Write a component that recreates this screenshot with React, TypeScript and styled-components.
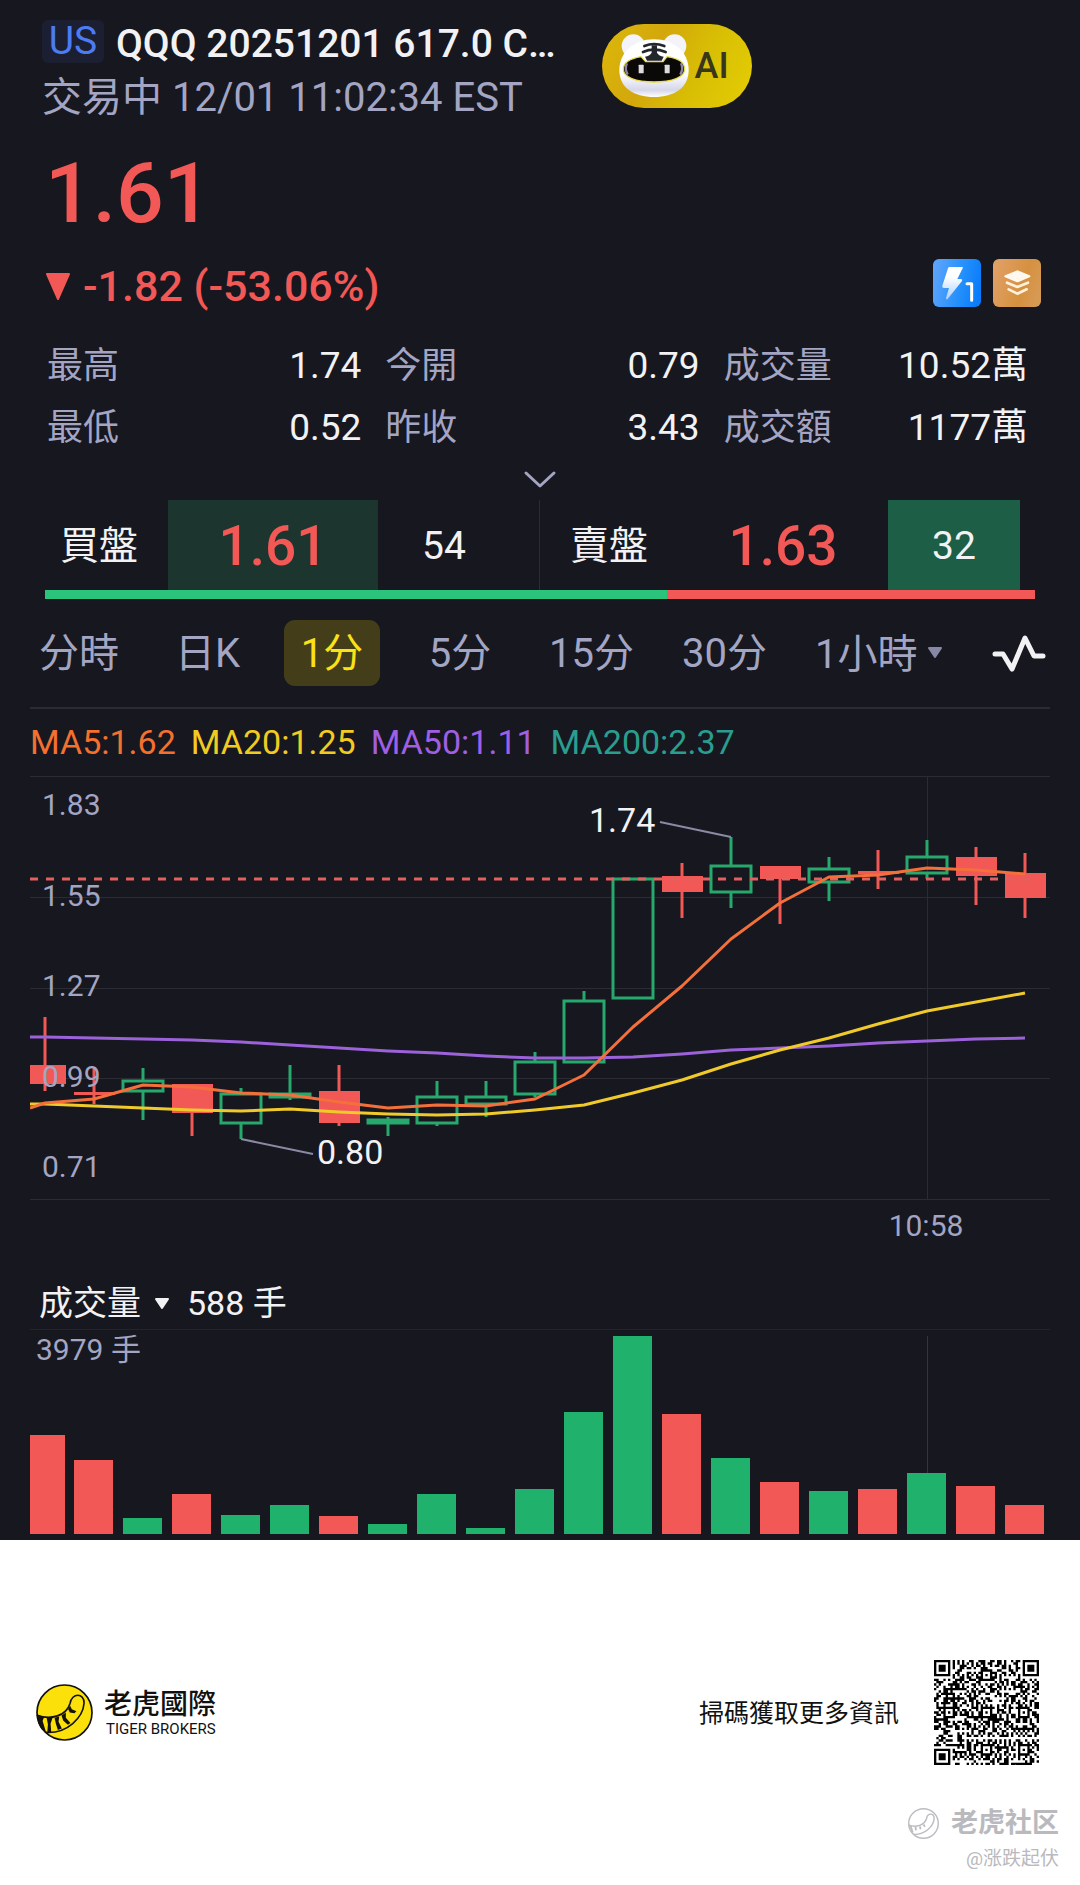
import React from "react";
import styled, { createGlobalStyle } from "styled-components";

const color = {
  bg: "#16171f",
  text: "#f2f2f4",
  muted: "#a3a5c3",
  red: "#f25855",
  green: "#20b26c",
  line: "#2b2c33",
};

const GlobalStyle = createGlobalStyle`
  *, *::before, *::after { box-sizing: border-box; }
  body {
    margin: 0;
    background: #fff;
    font-family: Roboto, "Noto Sans CJK SC", sans-serif;
  }
  button, select {
    margin: 0;
    padding: 0;
    border: 0;
    background: none;
    color: inherit;
    font: inherit;
    cursor: pointer;
  }
  h1, p, dl, dd { margin: 0; font-weight: 400; }
  svg { display: block; }
`;

/* ---------- data ---------- */

type Candle = { o: number; c: number; h: number; l: number; vol: number };

const k = (o: number, c: number, h: number, l: number, vol: number): Candle => ({ o, c, h, l, vol });

const candles: Candle[] = [
  k(1.03, 0.97, 1.18, 0.95, 1990),
  k(0.945, 0.94, 1.02, 0.91, 1487),
  k(0.95, 0.98, 1.02, 0.86, 322),
  k(0.97, 0.88, 0.97, 0.81, 804),
  k(0.85, 0.94, 0.96, 0.8, 382),
  k(0.93, 0.94, 1.03, 0.92, 583),
  k(0.95, 0.85, 1.03, 0.84, 352),
  k(0.85, 0.86, 0.87, 0.81, 195),
  k(0.85, 0.93, 0.98, 0.84, 808),
  k(0.91, 0.93, 0.98, 0.87, 121),
  k(0.94, 1.04, 1.07, 0.93, 904),
  k(1.04, 1.23, 1.26, 1.04, 2452),
  k(1.24, 1.61, 1.61, 1.24, 3979),
  k(1.62, 1.57, 1.66, 1.49, 2412),
  k(1.57, 1.65, 1.74, 1.52, 1527),
  k(1.65, 1.61, 1.65, 1.47, 1045),
  k(1.6, 1.64, 1.68, 1.54, 860),
  k(1.635, 1.63, 1.7, 1.58, 904),
  k(1.63, 1.68, 1.73, 1.61, 1226),
  k(1.68, 1.62, 1.71, 1.53, 965),
  k(1.63, 1.55, 1.69, 1.49, 588),
];

const legend = [
  { label: "MA5:1.62", color: "#f4702f" },
  { label: "MA20:1.25", color: "#f2cb22" },
  { label: "MA50:1.11", color: "#9f5fe3" },
  { label: "MA200:2.37", color: "#2a9d8f" },
];

/* vertical positions of each average, the first one at the left edge of the plot */
const averages = [
  {
    color: "#9c62da",
    ys: [261, 261, 262, 263, 264, 266, 269, 272, 275, 277, 280, 282, 282, 281, 278, 274, 272, 270, 267, 265, 263, 262],
  },
  {
    color: "#f0ca2a",
    ys: [328, 328, 330, 332, 334, 335, 333, 336, 338, 339, 338, 334, 329, 317, 304, 288, 274, 262, 248, 235, 226, 217],
  },
  {
    color: "#f4703a",
    ys: [332, 327, 323, 309, 311, 317, 319, 326, 332, 329, 330, 323, 299, 251, 210, 163, 127, 101, 99, 92, 94, 98],
  },
];

const stats = [
  ["最高", "1.74"],
  ["今開", "0.79"],
  ["成交量", "10.52萬"],
  ["最低", "0.52"],
  ["昨收", "3.43"],
  ["成交額", "1177萬"],
];

const periods = ["分時", "日K", "1分", "5分", "15分", "30分"];

/* ---------- header ---------- */

const Panel = styled.main`
  background: ${color.bg};
  color: ${color.text};
  padding: 20px 0 6px;
`;

const Header = styled.header`
  display: flex;
  align-items: flex-start;
  gap: 46px;
  padding: 0 42px;
`;

const Heading = styled.div`
  display: flex;
  flex-direction: column;
  gap: 5px;
`;

const TitleRow = styled.div`
  display: flex;
  align-items: flex-start;
  gap: 12px;
`;

const MarketBadge = styled.span`
  width: 62px;
  border-radius: 6px;
  background: #1b1f31;
  color: #4b7cf3;
  font-size: 39px;
  line-height: 43px;
  text-align: center;
`;

const Title = styled.h1`
  font-size: 39px;
  font-weight: 500;
  line-height: 48px;
  white-space: nowrap;
`;

const Session = styled.p`
  color: ${color.muted};
  font-size: 40px;
  line-height: 50px;
  white-space: nowrap;
`;

const AiButton = styled.button`
  display: flex;
  align-items: center;
  gap: 6px;
  width: 150px;
  height: 84px;
  margin-top: 4px;
  padding-left: 17px;
  border-radius: 42px;
  background: linear-gradient(115deg, #dcb90a 0%, #d3a70c 35%, #d8bf04 65%, #e6cd05 100%);
  color: #38361c;
  font-size: 36px;
  font-weight: 500;
`;

const Price = styled.p`
  padding: 0 45px;
  margin-top: 28px;
  color: ${color.red};
  font-size: 84px;
  font-weight: 500;
  line-height: 86px;
`;

const ChangeRow = styled.div`
  display: flex;
  align-items: flex-start;
  justify-content: space-between;
  margin-top: 22px;
  padding: 0 39px 0 45px;
`;

const Change = styled.p`
  display: flex;
  align-items: center;
  gap: 12px;
  color: ${color.red};
  font-size: 43px;
  font-weight: 500;
  line-height: 54px;
`;

const Badges = styled.div`
  display: flex;
  gap: 12px;
`;

/* ---------- figures ---------- */

const Stats = styled.dl`
  display: grid;
  grid-template-columns: repeat(3, 1fr);
  column-gap: 24px;
  margin-top: 22px;
  padding: 0 42px 0 47px;
`;

const Stat = styled.div`
  display: flex;
  justify-content: space-between;
  line-height: 62px;
  &:nth-child(3n) { padding-right: 10px; }
  dt {
    padding-top: 1px;
    color: ${color.muted};
    font-size: 36px;
    line-height: 61px;
  }
  dd { font-size: 37px; }
`;

const Expand = styled.button`
  display: flex;
  justify-content: center;
  width: 100%;
  padding: 11px 0;
`;

const Quotes = styled.section`
  display: grid;
  grid-template-columns: 1fr 1fr;
  padding: 0 45px;
`;

const Side = styled.div<{ $divided?: boolean }>`
  display: grid;
  grid-template-columns: 123fr 210fr 132fr;
  height: 90px;
  padding: ${(p) => (p.$divided ? "0 29px 0 0" : "0 15px")};
  border-right: ${(p) => (p.$divided ? `1px solid ${color.line}` : "0")};
  line-height: 93px;
`;

const SideName = styled.span`
  padding-left: 15px;
  font-size: 39px;
`;

const SidePrice = styled.span<{ $fill?: string }>`
  background: ${(p) => p.$fill ?? "none"};
  color: ${color.red};
  font-size: 55px;
  font-weight: 500;
  text-align: center;
`;

const SideSize = styled.span<{ $fill?: string }>`
  background: ${(p) => p.$fill ?? "none"};
  font-size: 39px;
  text-align: center;
`;

const DepthBar = styled.div`
  display: flex;
  height: 9px;
  margin: 0 45px;
`;

const Depth = styled.div<{ $share: number; $color: string }>`
  flex: ${(p) => p.$share} 1 0;
  background: ${(p) => p.$color};
`;

/* ---------- periods ---------- */

const Periods = styled.nav`
  display: grid;
  grid-template-columns: 128fr 129fr 120fr 136fr 127fr 139fr 184fr 68fr;
  align-items: center;
  justify-items: center;
  margin-top: 21px;
  padding: 0 34px 0 15px;
`;

const Period = styled.button<{ $active?: boolean }>`
  padding: 2px 17px 0;
  border-radius: 11px;
  background: ${(p) => (p.$active ? "#443d1a" : "none")};
  color: ${(p) => (p.$active ? "#fbe116" : color.muted)};
  font-size: 40px;
  line-height: 64px;
  white-space: nowrap;
`;

const Picker = styled.label<{ $color: string }>`
  display: flex;
  align-items: center;
  gap: 13px;
  color: ${(p) => p.$color};
  select { appearance: none; }
`;

const PeriodPicker = styled(Picker)`
  justify-self: start;
  gap: 9px;
  padding-left: 21px;
  font-size: 40px;
  select { padding-top: 2px; }
`;

const IconButton = styled.button`
  display: flex;
  justify-self: end;
`;

/* ---------- charts ---------- */

const ChartArea = styled.section`
  margin: 21px 30px 0;
  border-top: 2px solid ${color.line};
`;

const Legend = styled.div`
  display: flex;
  gap: 15px;
  font-size: 34px;
  line-height: 67px;
`;

const LegendItem = styled.span<{ $color: string }>`
  color: ${(p) => p.$color};
`;

const Drawing = styled.svg`
  width: 100%;
  height: auto;
  font-family: Roboto, "Noto Sans CJK SC", sans-serif;
`;

const VolumeHead = styled.div`
  display: flex;
  align-items: center;
  gap: 17px;
  margin-top: 32px;
  padding-left: 9px;
  border-bottom: 1px solid #24252c;
  font-size: 34px;
  line-height: 51px;
`;

/* ---------- footer ---------- */

const Footer = styled.footer`
  display: flex;
  flex-direction: column;
  padding: 120px 21px 12px 36px;
  background: #fff;
  color: #111;
`;

const BrandRow = styled.div`
  display: flex;
  align-items: center;
  padding-right: 20px;
`;

const Brand = styled.div`
  display: flex;
  flex-direction: column;
  margin-left: 11px;
  padding-top: 1px;
  font-size: 28px;
  font-weight: 500;
  line-height: 32px;
`;

const BrandLatin = styled.span`
  padding-left: 2px;
  font-size: 15px;
  font-weight: 400;
  line-height: 16px;
`;

const ScanHint = styled.p`
  margin-left: auto;
  margin-right: 35px;
  padding-top: 2px;
  font-size: 25px;
  line-height: 36px;
`;

const Watermark = styled.div`
  display: flex;
  flex-direction: column;
  align-items: flex-end;
  margin-top: 38px;
  color: #b9b9be;
`;

const WatermarkBrand = styled.div`
  display: flex;
  align-items: center;
  gap: 12px;
  font-size: 27px;
  font-weight: 700;
  line-height: 40px;
`;

const Author = styled.span`
  padding-top: 2px;
  font-size: 19px;
  line-height: 28px;
`;

/* ---------- icons ---------- */

const TigerHead = () => (
  <svg width="70" height="64" viewBox="0 0 210 192" aria-hidden="true">
    <defs>
      <linearGradient id="fur" x1="0" y1="0" x2="0" y2="1">
        <stop offset="0.6" stopColor="#fff" />
        <stop offset="0.88" stopColor="#d5d7ea" />
        <stop offset="1" stopColor="#fff" />
      </linearGradient>
    </defs>
    <circle cx="43" cy="36" r="35" fill="#f3f3f9" />
    <circle cx="167" cy="36" r="35" fill="#f3f3f9" />
    <path d="M105 16C165 16 209 56 209 108C209 162 165 189 105 189C45 189 1 162 1 108C1 56 45 16 105 16Z" fill="url(#fur)" />
    <path d="M13 106C13 84 32 74 66 68L80 83H132L144 68C180 74 197 84 197 106C197 130 160 144 105 144C50 144 13 130 13 106Z" fill="#0b0908" stroke="#e8dc50" strokeWidth="4" strokeLinejoin="round" />
    <path d="M24 88Q16 104 26 122M186 88Q194 104 184 122" fill="none" stroke="#8e86a8" strokeWidth="7" />
    <path d="M84 80L78 68Q92 66 98 56V34H114V56Q120 66 134 68L128 80Z" fill="#23262b" />
    <path d="M76 36Q105 24 136 36M72 54Q105 40 140 54" fill="none" stroke="#23262b" strokeWidth="8" strokeLinecap="round" />
    <rect x="59" y="92" width="15" height="26" rx="2" fill="#dcdce0" />
    <rect x="137" y="92" width="15" height="26" rx="2" fill="#dcdce0" />
  </svg>
);

const LevelOneIcon = () => (
  <svg width="48" height="48" viewBox="0 0 144 144" role="img" aria-label="Lv1">
    <defs>
      <linearGradient id="blue" x1="0" y1="0.3" x2="1" y2="0.5">
        <stop offset="0" stopColor="#5da4fb" />
        <stop offset="0.6" stopColor="#2490fb" />
        <stop offset="1" stopColor="#0a7cfb" />
      </linearGradient>
      <linearGradient id="bolt" x1="0" y1="0" x2="0" y2="1">
        <stop offset="0.3" stopColor="#fff" />
        <stop offset="1" stopColor="#a9d0fd" />
      </linearGradient>
    </defs>
    <rect width="144" height="144" rx="18" fill="url(#blue)" />
    <path d="M50 24H88Q91 24 89 28L73 60H84Q90 61 87 66L44 120Q39 124 39 117L48 87H32Q26 86 28 80L45 28Q46 24 50 24Z" fill="url(#bolt)" />
    <path d="M102 74H116V124" fill="none" stroke="#fff" strokeWidth="9" strokeLinecap="round" strokeLinejoin="round" />
  </svg>
);

const LayersIcon = () => (
  <svg width="48" height="48" viewBox="0 0 144 144" role="img" aria-label="深度">
    <defs>
      <linearGradient id="amber" x1="0" y1="0.3" x2="1" y2="0.6">
        <stop offset="0" stopColor="#e0a066" />
        <stop offset="0.65" stopColor="#d5913f" />
        <stop offset="1" stopColor="#d79a55" />
      </linearGradient>
    </defs>
    <rect width="144" height="144" rx="18" fill="url(#amber)" />
    <path d="M36 49L70 35Q73 33 77 35L110 49Q115 52 110 55L77 69Q73 71 70 69L36 55Q31 52 36 49Z" fill="#fff8ee" />
    <path d="M42 71L73 84L105 71M47 91L73 104L101 91" fill="none" stroke="#fff1dc" strokeWidth="8" strokeLinecap="round" strokeLinejoin="round" />
  </svg>
);

const Caret = ({ fill }: { fill: string }) => (
  <svg width="16" height="12" viewBox="0 0 16 12" aria-hidden="true">
    <path d="M2 1H14L8 10Z" fill={fill} stroke={fill} strokeWidth="2" strokeLinejoin="round" />
  </svg>
);

const TAIL = "M2 94C45 110 92 96 103 58C108 26 146 26 145 58C142 100 95 150 30 146";

const TailLogo = () => (
  <svg width="57" height="57" viewBox="0 0 172 172" aria-hidden="true">
    <circle cx="86" cy="86" r="83" fill="#fbe00a" stroke="#14110a" strokeWidth="5" />
    <path d={TAIL} fill="none" stroke="#14110a" strokeWidth="5" />
    <path d="M3 92L24 100L20 112L30 145L18 138C8 126 3 112 3 92Z" fill="#14110a" />
    <path d="M32 101L50 102L44 120L46 145L34 146L36 122Z" fill="#14110a" />
    <path d="M56 102L70 98L68 114L78 134L66 139L60 120Z" fill="#14110a" />
    <path d="M77 95L90 86L90 102L104 118L96 123L82 110Z" fill="#14110a" />
    <path d="M97 76L103 66L108 76L122 82L116 88L102 86Z" fill="#14110a" />
  </svg>
);

const TailOutline = () => (
  <svg width="31" height="31" viewBox="0 0 172 172" aria-hidden="true">
    <circle cx="86" cy="86" r="82" fill="none" stroke="#bcbcc1" strokeWidth="8" />
    <path d={TAIL} fill="none" stroke="#bcbcc1" strokeWidth="8" />
    <path d="M14 98L26 136M42 104L44 124M66 102L70 118M86 92L94 104" stroke="#bcbcc1" strokeWidth="10" />
  </svg>
);

/* ---------- QR code ---------- */

const QR_SIZE = 45;

const inFinder = (x: number, y: number) =>
  (x < 8 && y < 8) || (x >= QR_SIZE - 8 && y < 8) || (x < 8 && y >= QR_SIZE - 8);

const ring = (dx: number, dy: number, dark: number[]) => dark.includes(Math.max(Math.abs(dx), Math.abs(dy)));

const qrPath = (() => {
  const marks = [[22, 22], [38, 38], [22, 38], [38, 22], [6, 22], [22, 6]];
  let seed = 20251201;
  let d = "";
  for (let y = 0; y < QR_SIZE; y++) {
    for (let x = 0; x < QR_SIZE; x++) {
      seed = (seed * 1103515245 + 12345) % 2147483648;
      let dark = (seed >> 12) % 2 === 0;
      const mark = marks.find(([mx, my]) => Math.abs(x - mx) < 3 && Math.abs(y - my) < 3);
      if (inFinder(x, y)) {
        const cx = x < 8 ? 3 : QR_SIZE - 4;
        const cy = y < 8 ? 3 : QR_SIZE - 4;
        dark = ring(x - cx, y - cy, [0, 1, 3]);
      } else if (mark) {
        dark = ring(x - mark[0], y - mark[1], [0, 2]);
      } else if (x === 6 || y === 6) {
        dark = (x + y) % 2 === 0;
      }
      if (dark) d += `M${x} ${y}h1v1h-1z`;
    }
  }
  return d;
})();

const QrCode = () => (
  <svg width="105" height="105" viewBox={`0 0 ${QR_SIZE} ${QR_SIZE}`} role="img" aria-label="QR code">
    <path d={qrPath} fill="#000" />
  </svg>
);

/* ---------- charts ---------- */

const WIDTH = 1020;
const xAt = (i: number) => 15 + i * 49;
const yAt = (price: number) => Math.round((1.61 - price) * 321 + 103);
const axis = [1.83, 1.55, 1.27, 0.99, 0.71];
const MARK = 18;

const PriceChart = () => (
  <Drawing viewBox={`0 0 ${WIDTH} 470`} role="img" aria-label="K線圖">
    <g stroke={color.line}>
      {[0.5, 121.5, 212.5, 302.5, 423.5].map((y) => (
        <line key={y} x1="0" x2={WIDTH} y1={y} y2={y} />
      ))}
      <line x1={xAt(MARK) + 0.5} x2={xAt(MARK) + 0.5} y1="0" y2="423" />
    </g>
    {candles.map((c, i) => {
      const x = xAt(i);
      const up = c.c > c.o;
      const top = yAt(Math.max(c.o, c.c));
      const bottom = yAt(Math.min(c.o, c.c));
      const tone = up ? "#27a86d" : color.red;
      return (
        <g key={i} stroke={tone} strokeWidth="3">
          <line x1={x} x2={x} y1={yAt(c.h)} y2={top} />
          <line x1={x} x2={x} y1={bottom} y2={yAt(c.l)} />
          {up ? (
            <rect x={x - 20} y={top} width="40" height={bottom - top} fill="none" />
          ) : (
            <rect x={x - 20} y={top} width="41" height={Math.max(bottom - top, 3)} fill={tone} stroke="none" />
          )}
        </g>
      );
    })}
    <line x1="0" x2={WIDTH - 20} y1="103" y2="103" stroke="#e2605f" strokeWidth="3" strokeDasharray="8 8" />
    {averages.map((a) => (
      <polyline
        key={a.color}
        points={a.ys.map((y, i) => `${i === 0 ? 0 : xAt(i - 1)},${y}`).join(" ")}
        fill="none"
        stroke={a.color}
        strokeWidth="3"
        strokeLinejoin="round"
      />
    ))}
    <g fill={color.muted} fontSize="30">
      {axis.map((p, i) => (
        <text key={p} x="12" y={39 + Math.round(i * 90.5)}>{p.toFixed(2)}</text>
      ))}
      <text x="896" y="460" textAnchor="middle">10:58</text>
    </g>
    <path d="M630 46L701 61M211 363L283 378" stroke="#8a8aa5" strokeWidth="2" />
    <g fill={color.text} fontSize="34">
      <text x="559" y="56">1.74</text>
      <text x="287" y="388">0.80</text>
    </g>
  </Drawing>
);

const VolumeChart = () => {
  const peak = Math.max(...candles.map((c) => c.vol));
  return (
    <Drawing viewBox={`0 0 ${WIDTH} 204`} role="img" aria-label="成交量圖">
      <line x1={xAt(MARK) + 0.5} x2={xAt(MARK) + 0.5} y1="6" y2="204" stroke="#34353b" />
      {candles.map((c, i) => {
        const height = Math.round((c.vol / peak) * 198);
        return (
          <rect
            key={i}
            x={i === 0 ? 0 : xAt(i) - 20}
            y={204 - height}
            width={i === 0 ? 35 : 39}
            height={height}
            fill={c.c > c.o ? color.green : color.red}
          />
        );
      })}
      <text x="6" y="30" fontSize="30" fill={color.muted}>3979 手</text>
    </Drawing>
  );
};

/* ---------- page ---------- */

export default function App() {
  return (
    <>
      <GlobalStyle />
      <Panel>
        <Header>
          <Heading>
            <TitleRow>
              <MarketBadge>US</MarketBadge>
              <Title>QQQ 20251201 617.0 C…</Title>
            </TitleRow>
            <Session>交易中 12/01 11:02:34 EST</Session>
          </Heading>
          <AiButton type="button">
            <TigerHead />
            AI
          </AiButton>
        </Header>
        <Price>1.61</Price>
        <ChangeRow>
          <Change>
            <svg width="26" height="30" viewBox="0 0 26 30" aria-hidden="true">
              <path d="M2 3H24L13 28Z" fill={color.red} stroke={color.red} strokeWidth="2" strokeLinejoin="round" />
            </svg>
            -1.82 (-53.06%)
          </Change>
          <Badges>
            <LevelOneIcon />
            <LayersIcon />
          </Badges>
        </ChangeRow>

        <Stats>
          {stats.map(([name, value]) => (
            <Stat key={name}>
              <dt>{name}</dt>
              <dd>{value}</dd>
            </Stat>
          ))}
        </Stats>
        <Expand type="button" aria-label="展開">
          <svg width="34" height="19" viewBox="0 0 34 19" fill="none" aria-hidden="true">
            <path d="M3 3L17 16L31 3" stroke={color.muted} strokeWidth="3" strokeLinecap="round" strokeLinejoin="round" />
          </svg>
        </Expand>

        <Quotes>
          <Side $divided>
            <SideName>買盤</SideName>
            <SidePrice $fill="#1c352f">1.61</SidePrice>
            <SideSize>54</SideSize>
          </Side>
          <Side>
            <SideName>賣盤</SideName>
            <SidePrice>1.63</SidePrice>
            <SideSize $fill="#1d5e46">32</SideSize>
          </Side>
        </Quotes>
        <DepthBar>
          <Depth $share={54} $color="#2bc47d" />
          <Depth $share={32} $color={color.red} />
        </DepthBar>

        <Periods>
          {periods.map((p) => (
            <Period key={p} type="button" $active={p === "1分"}>{p}</Period>
          ))}
          <PeriodPicker $color={color.muted}>
            <select aria-label="更多週期">
              <option>1小時</option>
            </select>
            <Caret fill="#8788a6" />
          </PeriodPicker>
          <IconButton type="button" aria-label="指標">
            <svg width="54" height="38" viewBox="0 0 54 38" fill="none" aria-hidden="true">
              <path d="M3 20H11L20 35L33 4L42 22H51" stroke={color.text} strokeWidth="5" strokeLinecap="round" strokeLinejoin="round" />
            </svg>
          </IconButton>
        </Periods>

        <ChartArea>
          <Legend>
            {legend.map((l) => (
              <LegendItem key={l.label} $color={l.color}>{l.label}</LegendItem>
            ))}
          </Legend>
          <PriceChart />
          <VolumeHead>
            <Picker $color={color.text}>
              <select aria-label="副圖指標">
                <option>成交量</option>
              </select>
              <Caret fill={color.text} />
            </Picker>
            <span>588 手</span>
          </VolumeHead>
          <VolumeChart />
        </ChartArea>
      </Panel>

      <Footer>
        <BrandRow>
          <TailLogo />
          <Brand>
            老虎國際
            <BrandLatin>TIGER BROKERS</BrandLatin>
          </Brand>
          <ScanHint>掃碼獲取更多資訊</ScanHint>
          <QrCode />
        </BrandRow>
        <Watermark>
          <WatermarkBrand>
            <TailOutline />
            老虎社区
          </WatermarkBrand>
          <Author>@涨跌起伏</Author>
        </Watermark>
      </Footer>
    </>
  );
}
